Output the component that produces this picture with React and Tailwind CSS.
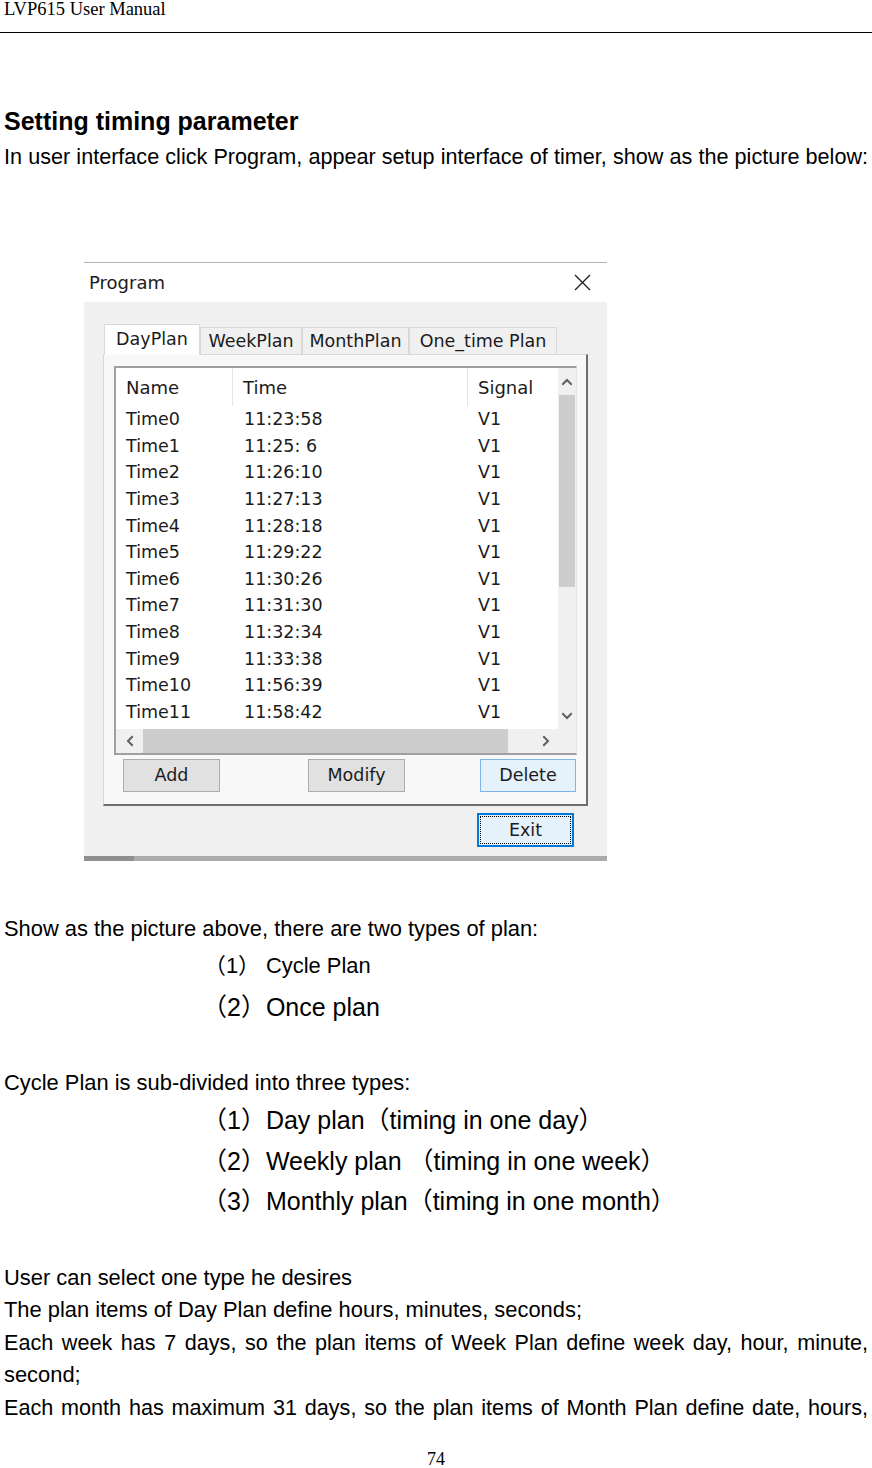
import React from 'react';

const rows = [
  ['Time0', '11:23:58'],
  ['Time1', '11:25: 6'],
  ['Time2', '11:26:10'],
  ['Time3', '11:27:13'],
  ['Time4', '11:28:18'],
  ['Time5', '11:29:22'],
  ['Time6', '11:30:26'],
  ['Time7', '11:31:30'],
  ['Time8', '11:32:34'],
  ['Time9', '11:33:38'],
  ['Time10', '11:56:39'],
  ['Time11', '11:58:42'],
];

const chevrons = {
  up: 'M2 8 L6 4 L10 8',
  down: 'M2 4 L6 8 L10 4',
  left: 'M8 2 L4 6 L8 10',
  right: 'M4 2 L8 6 L4 10',
};

const Chevron = ({ dir }) => (
  <svg width="12" height="12" viewBox="0 0 12 12" fill="none">
    <path d={chevrons[dir]} stroke="#606060" strokeWidth="2" strokeLinecap="square" />
  </svg>
);

const Tab = ({ label, width, active }) => (
  <div
    className={`flex items-center justify-center border border-b-0 border-[#d9d9d9] text-[17.5px] ${
      active ? 'h-[31px] bg-white relative z-10 -mb-px pb-[2px]' : 'h-[27px] bg-[#f0f0f0]'
    }`}
    style={{ width }}
  >
    {label}
  </div>
);

const WinButton = ({ label, className }) => (
  <div className={`h-[33px] flex items-center justify-center text-[17.5px] border ${className}`}>
    {label}
  </div>
);

const ProgramDialog = () => (
  <div className="ml-[80px] w-[523px] h-[599px] flex flex-col border-t border-[#b4b4b4] font-['DejaVu_Sans',sans-serif] text-[#1b1b1b]">
    {/* title bar */}
    <div className="h-[39px] bg-white flex items-center justify-between pl-[5px] pr-[16px]">
      <span className="text-[18px]">Program</span>
      <svg width="17" height="17" viewBox="0 0 17 17">
        <path d="M1 1 L16 16 M16 1 L1 16" stroke="#222" strokeWidth="1.4" />
      </svg>
    </div>

    {/* body */}
    <div className="flex-1 bg-[#f0f0f0] pl-[19px] pt-[21px]">
      <div className="flex items-end h-[31px]">
        <div className="ml-[1px] flex items-end">
          <Tab label="DayPlan" width={96} active />
          <Tab label="WeekPlan" width={102} />
          <Tab label="MonthPlan" width={107} />
          <Tab label="One_time Plan" width={148} />
        </div>
      </div>

      {/* tab panel */}
      <div className="w-[485px] h-[452px] bg-[#f8f8f8] border-l border-t border-[#d9d9d9] border-r-2 border-b-2 border-r-[#6e6e6e] border-b-[#6e6e6e] pl-[10px] pt-[11px]">
        {/* list view */}
        <div className="w-[463px] h-[389px] bg-white flex flex-col border-t-2 border-l-2 border-b-2 border-r border-[#a0a0a0] border-r-[#e3e3e3]">
          <div className="flex h-[361px]">
            <div className="w-[443px] flex flex-col text-[17.5px]">
              <div className="h-[38px] flex items-center shrink-0 text-[18px]">
                <div className="w-[117px] h-full flex items-center pl-[10px] border-r border-[#e5e5e5]">Name</div>
                <div className="w-[235px] h-full flex items-center pl-[10px] border-r border-[#e5e5e5]">Time</div>
                <div className="flex-1 h-full flex items-center pl-[10px]">Signal</div>
              </div>
              {rows.map(([name, time]) => (
                <div key={name} className="h-[26.6px] flex items-center">
                  <div className="w-[117px] pl-[10px]">{name}</div>
                  <div className="w-[235px] pl-[11px] whitespace-pre">{time}</div>
                  <div className="flex-1 pl-[10px]">V1</div>
                </div>
              ))}
            </div>
            {/* vertical scrollbar */}
            <div className="w-[18px] bg-[#f0f0f0] flex flex-col">
              <div className="h-[27px] flex items-center justify-center">
                <Chevron dir="up" />
              </div>
              <div className="flex-1">
                <div className="h-[192px] mx-[1px] bg-[#cdcdcd]" />
              </div>
              <div className="h-[27px] flex items-center justify-center">
                <Chevron dir="down" />
              </div>
            </div>
          </div>
          {/* horizontal scrollbar */}
          <div className="flex flex-1">
            <div className="w-[443px] bg-[#f0f0f0] flex">
              <div className="w-[27px] flex items-center justify-center">
                <Chevron dir="left" />
              </div>
              <div className="w-[365px] bg-[#cdcdcd]" />
              <div className="flex-1" />
              <div className="w-[27px] flex items-center justify-center">
                <Chevron dir="right" />
              </div>
            </div>
            <div className="flex-1 bg-[#f0f0f0]" />
          </div>
        </div>

        {/* buttons */}
        <div className="flex mt-[4px]">
          <WinButton label="Add" className="ml-[9px] w-[97px] bg-[#e1e1e1] border-[#adadad]" />
          <WinButton label="Modify" className="ml-[88px] w-[97px] bg-[#e1e1e1] border-[#adadad]" />
          <WinButton label="Delete" className="ml-[75px] w-[96px] bg-[#e5f1fb] border-[#7eb4ea]" />
        </div>
      </div>

      {/* exit */}
      <div className="mt-[7px] ml-[374px] w-[97px] h-[34px] border-2 border-[#0078d7] bg-[#e5f1fb] p-[1px]">
        <div className="w-full h-full border border-dotted border-black flex items-center justify-center text-[17.5px]">
          Exit
        </div>
      </div>
    </div>

    {/* bottom strip */}
    <div className="h-[5px] flex">
      <div className="w-[50px] bg-[#8f8f8f]" />
      <div className="flex-1 bg-[#ababab]" />
    </div>
  </div>
);

const App = () => {
  const body = "font-['Liberation_Sans','Noto_Sans_CJK_SC',sans-serif]";
  return (
    <div className="w-[872px] h-[1468px] bg-white text-black overflow-hidden">
      <header className="h-[33px] border-b border-black px-[4px]">
        <div className="font-['Liberation_Serif',serif] text-[18.5px] leading-[19px]">LVP615 User Manual</div>
      </header>

      <main className={`px-[4px] ${body}`}>
        <h2 className="mt-[73px] text-[25px] font-bold leading-[30px]">Setting timing parameter</h2>
        <p className="mt-[5px] text-[21.6px] leading-[32px] whitespace-nowrap text-justify [text-align-last:justify]">
          In user interface click Program, appear setup interface of timer, show as the picture below:
        </p>

        <div className="mt-[89px]">
          <ProgramDialog />
        </div>

        <div className="text-[21.9px]">
          <p className="mt-[52px] leading-[32px]">Show as the picture above, there are two types of plan:</p>
          <p className="mt-[5px] leading-[32px] pl-[200px]">（1） Cycle Plan</p>
          <p className="mt-[7px] leading-[36px] text-[25px] pl-[198px]">（2）Once plan</p>

          <p className="mt-[42px] leading-[32px]">Cycle Plan is sub-divided into three types:</p>
          <div className="mt-[1px] text-[25px] leading-[40.5px] pl-[198px] whitespace-pre">
            <p>（1）Day plan（timing in one day）</p>
            <p>（2）Weekly plan （timing in one week）</p>
            <p>（3）Monthly plan（timing in one month）</p>
          </div>

          <div className="mt-[40px] leading-[32.5px]">
            <p>User can select one type he desires</p>
            <p>The plan items of Day Plan define hours, minutes, seconds;</p>
            <p className="text-[21.6px] whitespace-nowrap text-justify [text-align-last:justify]">
              Each week has 7 days, so the plan items of Week Plan define week day, hour, minute,
            </p>
            <p>second;</p>
            <p className="text-[21.6px] whitespace-nowrap text-justify [text-align-last:justify]">
              Each month has maximum 31 days, so the plan items of Month Plan define date, hours,
            </p>
          </div>
        </div>
      </main>

      <div className="mt-[26px] h-[18px] text-center font-['Liberation_Serif',serif] text-[18px] leading-[18px]">74</div>
    </div>
  );
};

export default App;
